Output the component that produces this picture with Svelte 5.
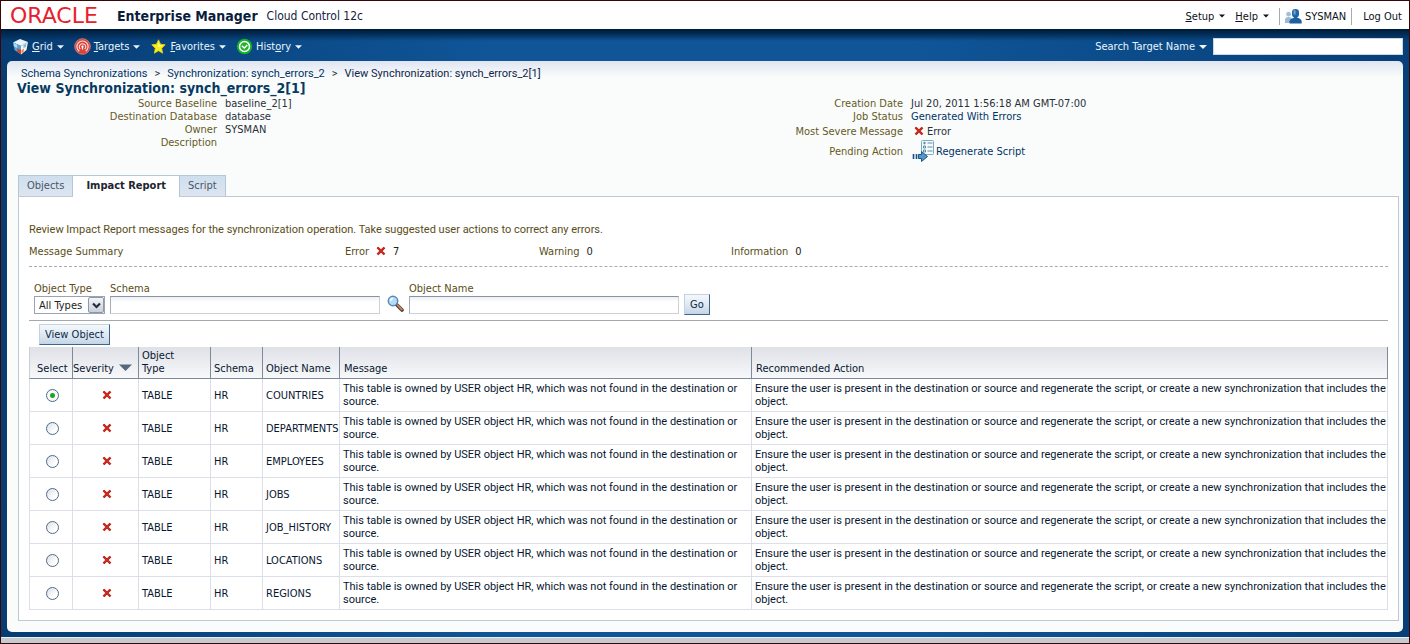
<script>
  const menus = [
    { icon: 'grid', before: '', key: 'G', after: 'rid' },
    { icon: 'target', before: '', key: 'T', after: 'argets' },
    { icon: 'star', before: '', key: 'F', after: 'avorites' },
    { icon: 'history', before: 'Hist', key: 'o', after: 'ry' }
  ];

  const columns = ['Select', 'Severity', 'Object Type', 'Schema', 'Object Name', 'Message', 'Recommended Action'];
  const names = ['COUNTRIES', 'DEPARTMENTS', 'EMPLOYEES', 'JOBS', 'JOB_HISTORY', 'LOCATIONS', 'REGIONS'];
  const message = 'This table is owned by USER object HR, which was not found in the destination or source.';
  const action =
    'Ensure the user is present in the destination or source and regenerate the script, or create a new synchronization that includes the object.';

  let selected = $state('COUNTRIES');
</script>

{#snippet caret()}
  <svg class="caret" width="8" height="4" viewBox="0 0 8 4" aria-hidden="true"><path d="M0 0h8L4 4z" fill="currentColor" /></svg>
{/snippet}

{#snippet errorIcon()}
  <svg class="err" width="10" height="10" viewBox="0 0 10 10" role="img" aria-label="Error">
    <path d="M1.500 1.500 8.500 8.500M8.500 1.500 1.500 8.500" stroke="#a3241a" stroke-width="2.400" />
    <path d="M1.400 1.400 8 8M8 1.400 1.800 7.800" stroke="#d9281c" stroke-width="1.300" />
  </svg>
{/snippet}

{#snippet menuIcon(name)}
  <svg width="17" height="17" viewBox="0 0 17 17" aria-hidden="true">
    {#if name === 'grid'}
      <path d="M1 4.500 8 1l8 3-7 4z" fill="#e9f4fb" />
      <path d="M1 4.500 9 8v8.500L2.500 12z" fill="#5d9fd0" />
      <path d="M9 8l7-4-1.500 8L9 16.500z" fill="#f3f5f7" />
      <path d="M1.500 5 5 6.600 5.400 10 2 8.600z" fill="#a9dcf0" />
      <path d="M5.500 10.300 9 12v4.500L5.200 13.800z" fill="#c8452f" />
      <path d="M11.500 7l3-1.800-.5 3.500-2.500 1.600z" fill="#8fb7d4" />
      <path d="M9.500 12.200 12 10.600l-.3 3-2.200 1.800z" fill="#e8894a" />
    {:else if name === 'target'}
      <circle cx="8.500" cy="8.500" r="7.800" fill="#d8433a" stroke="#e8857c" stroke-width=".8" />
      <path d="M5.300 13.200a5.600 5.600 0 1 1 6.400 0" fill="none" stroke="#fbdcd8" stroke-width="1.200" />
      <path d="M6.300 11.200a3.200 3.200 0 1 1 4.400 0" fill="none" stroke="#fbdcd8" stroke-width="1.100" />
      <path d="M8.500 8.500v3" stroke="#fff" stroke-width="1.200" />
      <circle cx="8.500" cy="8.600" r="1.100" fill="#fff" />
    {:else if name === 'star'}
      <path d="M8.500 1.800 10.500 6.200l4.700.6-3.500 3.400.9 5-4.100-2.500-4.100 2.500.9-5L1.800 6.800l4.700-.6z" fill="#f8f01e" stroke="#e9d300" stroke-width=".8" stroke-linejoin="round" />
      <path d="M8.400 3.500 9.500 7l3 .5-4 1.500z" fill="#fffcae" />
    {:else}
      <circle cx="8.500" cy="8.500" r="7.700" fill="#12b422" />
      <circle cx="8.500" cy="8.500" r="5" fill="#22b32c" stroke="#fff" stroke-width="1.500" />
      <path d="M5.800 7.800 8.300 10l3-3" fill="none" stroke="#fff" stroke-width="1.500" />
    {/if}
  </svg>
{/snippet}

<div class="page">
  <header class="brandbar">
    <div class="brand">
      <span class="oracle">ORACLE</span>
      <span class="product">Enterprise Manager</span>
      <span class="edition">Cloud Control 12c</span>
    </div>
    <nav class="user-nav" aria-label="Account">
      <button class="menu"><span><u>S</u>etup</span>{@render caret()}</button>
      <button class="menu"><span><u>H</u>elp</span>{@render caret()}</button>
      <span class="user">
        <svg width="17" height="17" viewBox="0 0 17 17" aria-hidden="true">
          <circle cx="3.600" cy="6.200" r="2.400" fill="#a3bfda" />
          <path d="M0 15v-3q0-3 3.600-3T7 12v3z" fill="#9cb9d6" />
          <rect x="7" y="1" width="7" height="8.500" rx="3.300" fill="#2467a8" />
          <path d="M4.500 15.500v-2q.2-2.600 4.500-3.700V8h3.200v1.800q4.400 1 4.500 3.700v2z" fill="#1e5f9f" />
          <path d="M8.600 2.500q1.400-1 2 0v4h-2z" fill="#6fa3d2" />
        </svg>
        SYSMAN
      </span>
      <a href="#logout">Log Out</a>
    </nav>
  </header>

  <div class="shell">
    <div class="menubar">
      <nav class="menus" aria-label="Main">
        {#each menus as m}
          <button class="menu">{@render menuIcon(m.icon)}<span>{m.before}<u>{m.key}</u>{m.after}</span>{@render caret()}</button>
        {/each}
      </nav>
      <div class="search">
        <label for="target">Search Target Name</label>{@render caret()}
        <input id="target" type="text" />
      </div>
    </div>

    <main>
      <nav class="crumbs" aria-label="Breadcrumb">
        <a href="#schema">Schema Synchronizations</a><span>&gt;</span>
        <a href="#sync">Synchronization: synch_errors_2</a><span>&gt;</span>
        <b>View Synchronization: synch_errors_2[1]</b>
      </nav>
      <h1>View Synchronization: synch_errors_2[1]</h1>

      <div class="facts">
        <dl>
          <dt>Source Baseline</dt><dd>baseline_2[1]</dd>
          <dt>Destination Database</dt><dd>database</dd>
          <dt>Owner</dt><dd>SYSMAN</dd>
          <dt>Description</dt><dd></dd>
        </dl>
        <dl class="status">
          <dt>Creation Date</dt><dd>Jul 20, 2011 1:56:18 AM GMT-07:00</dd>
          <dt>Job Status</dt><dd><a href="#job">Generated With Errors</a></dd>
          <dt>Most Severe Message</dt><dd class="severe">{@render errorIcon()}Error</dd>
          <dt>Pending Action</dt>
          <dd class="pending">
            <svg width="24" height="24" viewBox="0 0 24 24" aria-hidden="true">
              <rect x="10.500" y="1.500" width="12" height="14" rx="1" fill="#f4fafd" stroke="#7fa9bd" />
              <path d="M12 4h3M13.500 2.800v2.600M16.500 4h5M16.500 8h5M16.500 12h5" stroke="#5d8ca5" />
              <path d="M12.500 7h2v2h-2zM12.500 11h2v2h-2z" fill="none" stroke="#5d8ca5" />
              <path d="M2.500 15v5M5.500 15v5" stroke="#174f80" stroke-width="1.600" />
              <path d="M7.500 15.500h3v-3l6 5-6 5v-3h-3z" fill="#5595c8" stroke="#1b5585" />
            </svg><a href="#regenerate">Regenerate Script</a>
          </dd>
        </dl>
      </div>

      <div class="tabs" role="tablist">
        <button role="tab" aria-selected="false">Objects</button>
        <button role="tab" aria-selected="true" class="active">Impact Report</button>
        <button role="tab" aria-selected="false">Script</button>
      </div>

      <section class="panel">
        <p class="intro">Review Impact Report messages for the synchronization operation. Take suggested user actions to correct any errors.</p>
        <div class="summary">
          <span>Message Summary</span>
          <span>Error {@render errorIcon()}<em>7</em></span>
          <span>Warning <em>0</em></span>
          <span>Information <em>0</em></span>
        </div>

        <form class="filters" onsubmit={(e) => e.preventDefault()}>
          <div class="field">
            <label for="type">Object Type</label>
            <div class="pick">
              <select id="type"><option>All Types</option></select>
              <span class="drop"><svg width="9" height="7" viewBox="0 0 9 7" aria-hidden="true"><path d="M1 1.500 4.500 5 8 1.500" fill="none" stroke="#222c3c" stroke-width="2.200" /></svg></span>
            </div>
          </div>
          <div class="field">
            <label for="schema">Schema</label>
            <input id="schema" type="text" />
          </div>
          <button class="lens" type="button" aria-label="Search schema">
            <svg width="17" height="17" viewBox="0 0 17 17" aria-hidden="true">
              <path d="m9.500 9.500 5.500 5.500" stroke="#4a3932" stroke-width="3.600" stroke-linecap="round" />
              <path d="m10.500 10.200 4.300 4.300" stroke="#c08860" stroke-width="1.800" stroke-linecap="round" />
              <circle cx="6" cy="6" r="4.700" fill="#b5dcf6" stroke="#5688ba" stroke-width="1.500" />
              <path d="M3.500 6q0-2.500 2.500-2.500" fill="none" stroke="#fff" stroke-width="1.500" />
            </svg>
          </button>
          <div class="field">
            <label for="object">Object Name</label>
            <input id="object" type="text" />
          </div>
          <button class="btn" type="submit">Go</button>
        </form>

        <div class="toolbar"><button class="btn">View Object</button></div>

        <table>
          <colgroup>
            <col class="c-select" /><col class="c-severity" /><col class="c-type" /><col class="c-schema" />
            <col class="c-name" /><col class="c-message" /><col />
          </colgroup>
          <thead>
            <tr>
              {#each columns as c}
                <th scope="col">
                  {c}{#if c === 'Severity'}<svg class="sort" width="13" height="7" viewBox="0 0 13 7" aria-hidden="true"><path d="M0 .5h13L6.500 7z" fill="#56687c" /></svg>{/if}
                </th>
              {/each}
            </tr>
          </thead>
          <tbody>
            {#each names as name}
              <tr>
                <td><input type="radio" name="row" value={name} aria-label={name} bind:group={selected} /></td>
                <td>{@render errorIcon()}</td>
                <td>TABLE</td>
                <td>HR</td>
                <td class="name">{name}</td>
                <td class="prose">{message}</td>
                <td class="prose">{action}</td>
              </tr>
            {/each}
          </tbody>
        </table>
      </section>
    </main>
  </div>
</div>

<style>
  :global(body) {
    background: #c9ced3;
  }
  .page {
    box-sizing: border-box;
    min-height: 100vh;
    display: flex;
    flex-direction: column;
    border: 1px solid #3a0508;
    padding-bottom: 5px;
    background: #c6cbd0;
    color: #2b2f38;
    font: 11px/13px 'DejaVu Sans Condensed', 'DejaVu Sans', sans-serif;
  }
  button,
  input,
  select {
    box-sizing: border-box;
    margin: 0;
    font: inherit;
    color: inherit;
  }
  a {
    color: #003366;
    text-decoration: none;
  }
  svg {
    display: block;
    flex: none;
  }

  .brandbar {
    display: flex;
    justify-content: space-between;
    align-items: center;
    height: 28px;
    padding: 2px 7px 0 9px;
    box-sizing: border-box;
    background: #fff;
  }
  .brand {
    display: flex;
    align-items: center;
    white-space: nowrap;
  }
  .oracle {
    width: 107px;
    color: #e8202e;
    font: 22px/26px 'DejaVu Sans', sans-serif;
  }
  .product {
    margin-right: 9px;
    color: #0b1d3c;
    font-size: 14px;
    font-weight: bold;
  }
  .edition {
    color: #14233f;
    font-size: 12px;
  }
  .user-nav {
    display: flex;
    align-items: center;
    color: #0c1220;
  }
  .user-nav a {
    color: inherit;
    padding-left: 11px;
  }
  .menu {
    display: flex;
    align-items: center;
    padding: 0;
    border: 0;
    background: none;
  }
  .user-nav .menu {
    gap: 5px;
    margin-right: 10px;
  }
  .user-nav .caret {
    width: 6px;
  }
  .user {
    display: flex;
    align-items: center;
    gap: 3px;
    padding: 0 5px;
    border: 1px solid #a4abb5;
    border-width: 0 1px;
  }

  .shell {
    flex: 1;
    display: flex;
    flex-direction: column;
    padding: 0 6px 5px;
    border-bottom: 1px solid #e8f0f6;
    background:
      linear-gradient(#001b36, #01284f 4px, transparent 12px),
      linear-gradient(90deg, #063c72, #0f5598 35%, #0f5598 65%, #073f78);
  }
  .menubar {
    display: flex;
    justify-content: space-between;
    align-items: center;
    height: 32px;
    padding: 3px 0 0 5px;
    box-sizing: border-box;
    color: #eaf5fc;
  }
  .menus {
    display: flex;
    gap: 10px;
  }
  .menus .menu {
    gap: 3px;
  }
  .menus .caret {
    width: 7px;
    margin-left: 1px;
  }
  .search {
    display: flex;
    align-items: center;
    gap: 4px;
  }
  .search input {
    width: 190px;
    height: 17px;
    margin-left: 2px;
    border: 1px solid #c9d8e6;
    background: #fff;
    color: #222;
  }

  main {
    flex: 1;
    padding: 6px 4px 10px 10px;
    border-radius: 5px;
    background: linear-gradient(#dfe5f1, #fafcfc 16px);
  }
  .crumbs {
    display: flex;
    padding-left: 4px;
    font-family: Roboto, sans-serif;
    white-space: nowrap;
  }
  .crumbs span {
    margin: 0 7px;
  }
  .crumbs b {
    font-weight: normal;
    color: #10264a;
  }
  h1 {
    margin: 0;
    color: #073a60;
    font-size: 14px;
    line-height: 17px;
  }
  .facts {
    display: grid;
    grid-template-columns: 760px 1fr;
    height: 78px;
  }
  dl {
    display: grid;
    grid-template-columns: 200px 1fr;
    grid-auto-rows: min-content;
    column-gap: 8px;
    margin: 0;
  }
  dl.status {
    grid-template-columns: 126px 1fr;
  }
  dt {
    color: #665a1c;
    text-align: right;
    align-self: center;
  }
  dd {
    margin: 0;
  }
  .severe {
    display: flex;
    align-items: center;
    gap: 3px;
    height: 16px;
    padding-left: 3px;
  }
  .pending {
    display: flex;
    align-items: center;
    gap: 1px;
  }

  .tabs {
    display: flex;
    width: max-content;
    margin-left: 1px;
  }
  .tabs button {
    height: 21px;
    padding: 0 8px 2px;
    border: 1px solid #b6c6d6;
    border-width: 1px 1px 0;
    background: linear-gradient(#cfdfee, #dde5f0);
    color: #48566a;
  }
  .tabs button + button {
    border-left: 0;
  }
  .tabs .active {
    height: 22px;
    margin-bottom: -1px;
    padding: 0 13px 3px;
    background: #fff;
    color: #20252e;
    font-weight: bold;
    z-index: 1;
  }

  .panel {
    margin-left: 1px;
    padding: 26px 10px 10px;
    border: 1px solid #bfc9d3;
    background: #fff;
  }
  .intro {
    margin: 0;
    padding-bottom: 7px;
    color: #5a4d18;
    font-family: Roboto, sans-serif;
  }
  .summary {
    display: grid;
    grid-template-columns: 316px 194px 192px 1fr;
    height: 23px;
    border-bottom: 1px dashed #a9adb2;
    margin-bottom: 15px;
    color: #5a4d18;
  }
  .summary span {
    display: flex;
    align-items: center;
    gap: 7px;
    height: 16px;
  }
  .summary em {
    font-style: normal;
    color: #222;
  }

  .filters {
    display: flex;
    align-items: flex-end;
    padding: 0 5px 6px;
    border-bottom: 1px solid #a3a9b1;
  }
  .field {
    display: flex;
    flex-direction: column;
    gap: 1px;
    margin-right: 5px;
    color: #5a4d18;
  }
  .field input {
    width: 270px;
    height: 18px;
    border: 1px solid #cdd2d8;
    border-top-color: #8b93a3;
    border-left-color: #a6adb9;
    background: linear-gradient(#eceff5, #fff 5px);
    color: #222;
  }
  .pick {
    display: flex;
    width: 71px;
    height: 18px;
    box-sizing: border-box;
    border: 1px solid #9aa3b1;
    background: #fff;
    color: #222;
  }
  select {
    flex: 1;
    min-width: 0;
    padding: 0 0 0 4px;
    border: 0;
    appearance: none;
    background: none;
  }
  .drop {
    display: grid;
    place-items: center;
    width: 16px;
    box-sizing: border-box;
    border: 1px solid #8e98a8;
    border-radius: 2px;
    background: linear-gradient(#f2f4f8, #c9cfda);
  }
  .lens {
    margin: 0 5px 2px 2px;
    padding: 0;
    border: 0;
    background: none;
  }
  .btn {
    height: 21px;
    padding: 0 5px;
    border: 1px solid #c3d2e0;
    border-right-color: #3c648c;
    border-bottom-color: #3c648c;
    background: linear-gradient(#f4f8fb, #dbe6f0 60%, #c2d5e6);
    color: #0c2a48;
  }
  .filters .btn {
    margin-bottom: -1px;
  }
  .toolbar {
    padding: 3px 10px 2px;
  }

  table {
    width: 100%;
    table-layout: fixed;
    border-collapse: separate;
    border-spacing: 0;
    color: #08172f;
  }
  .c-select { width: 44px; }
  .c-severity { width: 66px; }
  .c-type { width: 72px; }
  .c-schema { width: 52px; }
  .c-name { width: 77px; }
  .c-message { width: 412px; }
  th {
    padding: 2px 3px 3px;
    border-right: 1px solid #7f8a99;
    border-bottom: 1px solid #7f8a99;
    background: linear-gradient(#dfe1e7, #f7f8fa);
    font-weight: normal;
    text-align: left;
    vertical-align: bottom;
    white-space: nowrap;
  }
  th:nth-child(2) {
    padding-left: 0;
  }
  th:nth-child(3) {
    padding-right: 24px;
    white-space: normal;
  }
  th:first-child {
    border-left: 1px solid #c9cfd8;
    padding-left: 7px;
  }
  th:nth-child(n + 6) {
    padding-left: 4px;
  }
  td {
    padding: 3px 0 3px 3px;
    border-right: 1px solid #dcdfe8;
    border-bottom: 1px solid #dcdfe8;
  }
  td:first-child {
    border-left: 1px solid #dcdfe8;
  }
  .name {
    white-space: nowrap;
  }
  .prose {
    font-family: Roboto, sans-serif;
  }
  .sort {
    display: inline-block;
    margin-left: 5px;
    vertical-align: 1px;
  }
  td .err {
    margin: 0 auto;
  }
  input[type='radio'] {
    display: block;
    width: 13px;
    height: 13px;
    margin: 0 auto;
    border: 1px solid #4f6a86;
    border-radius: 50%;
    appearance: none;
    background: linear-gradient(135deg, #dcdfe3, #fff 70%);
  }
  input[type='radio']:checked {
    background: radial-gradient(circle, #23a126 2px, #f6faf6 3px);
  }
</style>
